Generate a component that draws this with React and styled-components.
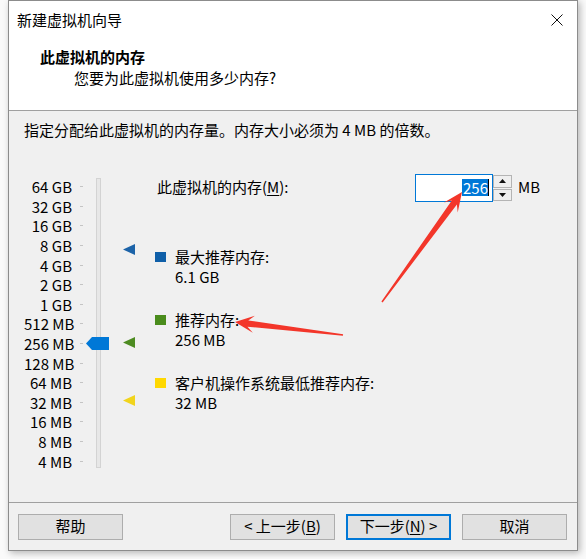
import React from 'react'
import styled, { createGlobalStyle } from 'styled-components'

const GlobalStyle = createGlobalStyle`
  html, body {
    margin: 0;
    padding: 0;
    background: #fafafa;
  }
  body {
    font-family: "Noto Sans CJK SC", "Noto Sans", sans-serif;
    font-size: 15px;
    color: #000;
  }
`

const ROW = 19.6

const scale = [
  '64 GB', '32 GB', '16 GB', '8 GB', '4 GB', '2 GB', '1 GB',
  '512 MB', '256 MB', '128 MB', '64 MB', '32 MB', '16 MB', '8 MB', '4 MB',
]

const markers = [
  { id: 'max', color: '#1c63a8', at: 3.2 },
  { id: 'rec', color: '#4d8b21', at: 7.95 },
  { id: 'min', color: '#f1d41c', at: 10.9 },
]

const legend = [
  { id: 'max', color: '#0f5fa8', title: '最大推荐内存:', value: '6.1 GB' },
  { id: 'rec', color: '#4a8c1c', title: '推荐内存:', value: '256 MB' },
  { id: 'min', color: '#ffd800', title: '客户机操作系统最低推荐内存:', value: '32 MB' },
]

// tapered screenshot-style arrow, from tail to tip
const arrowPoints = (tx, ty, hx, hy) => {
  const dx = hx - tx
  const dy = hy - ty
  const len = Math.hypot(dx, dy)
  const ux = dx / len
  const uy = dy / len
  const nx = -uy
  const ny = ux
  const at = (back, side) => [hx - ux * back + nx * side, hy - uy * back + ny * side]
  const pts = [
    [tx + nx * 0.8, ty + ny * 0.8],
    at(13, 3.2),
    at(19, 8.5),
    [hx, hy],
    at(19, -8.5),
    at(13, -3.2),
    [tx - nx * 0.8, ty - ny * 0.8],
  ]
  return pts.map(p => p.map(v => v.toFixed(1)).join(',')).join(' ')
}

const App = () => {
  return (
    <Page>
      <GlobalStyle />
      <Window>
        <Header>
          <TitleBar>
            <WindowTitle>新建虚拟机向导</WindowTitle>
            <CloseIcon width="12" height="12" viewBox="0 0 12 12">
              <path d="M0.5 0.5 L11.5 11.5 M11.5 0.5 L0.5 11.5" stroke="#111" strokeWidth="1" fill="none" />
            </CloseIcon>
          </TitleBar>
          <HeaderText>
            <PageTitle>此虚拟机的内存</PageTitle>
            <PageSubtitle>您要为此虚拟机使用多少内存?</PageSubtitle>
          </HeaderText>
        </Header>

        <Body>
          <Description>指定分配给此虚拟机的内存量。内存大小必须为 4 MB 的倍数。</Description>
          <Main>
            <SliderArea>
              <ScaleList>
                {scale.map(label => (
                  <ScaleRow key={label}>
                    <ScaleLabel>{label}</ScaleLabel>
                    <Tick />
                  </ScaleRow>
                ))}
              </ScaleList>
              <Track />
              <Thumb width="23" height="13" viewBox="0 0 23 13" style={{ top: 8.5 * ROW - 6.5 }}>
                <polygon points="0,6.5 6,0 23,0 23,13 6,13" fill="#0078d7" />
              </Thumb>
              <MarkerRail>
                {markers.map(m => (
                  <Marker key={m.id} width="12" height="11" viewBox="0 0 12 11" style={{ top: m.at * ROW + ROW / 2 - 5.5 }}>
                    <polygon points="0,5.5 12,0 12,11" fill={m.color} />
                  </Marker>
                ))}
              </MarkerRail>
            </SliderArea>

            <Info>
              <MemoryRow>
                <MemoryLabel>此虚拟机的内存(<u>M</u>):</MemoryLabel>
                <InputBox>
                  <Selected>256</Selected>
                  <Caret />
                </InputBox>
                <Spinner>
                  <SpinButton>
                    <svg width="7" height="4" viewBox="0 0 7 4"><polygon points="3.5,0 7,4 0,4" fill="#111" /></svg>
                  </SpinButton>
                  <SpinButton>
                    <svg width="7" height="4" viewBox="0 0 7 4"><polygon points="0,0 7,0 3.5,4" fill="#111" /></svg>
                  </SpinButton>
                </Spinner>
                <Unit>MB</Unit>
              </MemoryRow>

              <Legend>
                {legend.map(item => (
                  <LegendItem key={item.id}>
                    <Swatch $color={item.color} />
                    <LegendText>
                      <div>{item.title}</div>
                      <div>{item.value}</div>
                    </LegendText>
                  </LegendItem>
                ))}
              </Legend>
            </Info>
          </Main>
        </Body>

        <Footer>
          <Button>帮助</Button>
          <ButtonGroup>
            <Button>&lt; 上一步(<u>B</u>)</Button>
            <Button $primary>下一步(<u>N</u>) &gt;</Button>
            <Button>取消</Button>
          </ButtonGroup>
        </Footer>
      </Window>

      <Overlay width="586" height="559" viewBox="0 0 586 559">
        <polygon points={arrowPoints(382, 302, 462, 192)} fill="#f3362a" />
        <polygon points={arrowPoints(343, 335, 235, 322)} fill="#f3362a" />
      </Overlay>
    </Page>
  )
}

const Page = styled.div`
  position: relative;
  width: 586px;
  height: 559px;
  padding-left: 8px;
  box-sizing: border-box;
  overflow: hidden;
`

const Window = styled.div`
  width: 570px;
  height: 551px;
  box-sizing: border-box;
  border: 1px solid #8c8c8c;
  background: #f0f0f0;
  display: flex;
  flex-direction: column;
  box-shadow: 2px 2px 7px rgba(0, 0, 0, 0.28);
`

const Header = styled.div`
  height: 110px;
  box-sizing: border-box;
  background: #fff;
  border-bottom: 1px solid #a0a0a0;
`

const TitleBar = styled.div`
  height: 38px;
  display: flex;
  align-items: center;
  justify-content: space-between;
  padding: 0 14px 0 8px;
`

const WindowTitle = styled.div`
  line-height: 20px;
`

const CloseIcon = styled.svg`
  display: block;
`

const HeaderText = styled.div`
  margin-top: 7px;
  padding-left: 31px;
`

const PageTitle = styled.div`
  font-weight: bold;
  line-height: 21px;
`

const PageSubtitle = styled.div`
  line-height: 21px;
  padding-left: 34px;
`

const Body = styled.div`
  flex: 1;
  padding: 9px 0 0 15px;
`

const Description = styled.div`
  line-height: 20px;
`

const Main = styled.div`
  display: flex;
  align-items: flex-start;
  margin-top: 34px;
`

const SliderArea = styled.div`
  position: relative;
  display: flex;
  align-items: flex-start;
  margin-top: 3px;
`

const ScaleList = styled.div`
  display: flex;
  flex-direction: column;
`

const ScaleRow = styled.div`
  height: ${ROW}px;
  display: flex;
  align-items: center;
`

const ScaleLabel = styled.div`
  width: 48px;
  text-align: right;
  line-height: 1;
  white-space: nowrap;
`

const Tick = styled.div`
  width: 3px;
  height: 1px;
  margin-left: 8px;
  background: #c4c4c4;
`

const Track = styled.div`
  width: 5px;
  height: 290px;
  margin: 1px 0 0 13px;
  box-sizing: border-box;
  border: 1px solid #d3d3d3;
  background: #e7e7e7;
`

const Thumb = styled.svg`
  position: absolute;
  left: 62px;
  display: block;
`

const MarkerRail = styled.div`
  position: relative;
  width: 12px;
  height: ${15 * ROW}px;
  margin-left: 22px;
`

const Marker = styled.svg`
  position: absolute;
  left: 0;
  display: block;
`

const Info = styled.div`
  display: flex;
  flex-direction: column;
  margin-left: 20px;
`

const MemoryRow = styled.div`
  display: flex;
  align-items: center;
  height: 28px;
`

const MemoryLabel = styled.div`
  width: 260px;
  box-sizing: border-box;
  padding: 0 0 2px 2px;
  line-height: 20px;

  u {
    text-underline-offset: 2px;
  }
`

const InputBox = styled.div`
  width: 78px;
  height: 28px;
  box-sizing: border-box;
  border: 1px solid #0078d7;
  background: #fff;
  display: flex;
  justify-content: flex-end;
  align-items: center;
  padding: 0 3px 2px 0;
`

const Selected = styled.span`
  background: #0078d7;
  color: #fff;
  line-height: 17px;
  padding: 0 0 0 1px;
`

const Caret = styled.span`
  width: 1px;
  height: 17px;
  background: #000;
`

const Spinner = styled.div`
  width: 19px;
  height: 28px;
  display: flex;
  flex-direction: column;
  gap: 1px;
  padding: 1px 0;
  box-sizing: border-box;
`

const SpinButton = styled.div`
  flex: 1;
  box-sizing: border-box;
  border: 1px solid #b4b4b4;
  background: #efefef;
  display: flex;
  align-items: center;
  justify-content: center;

  svg {
    display: block;
  }
`

const Unit = styled.div`
  margin-left: 6px;
  line-height: 20px;
  padding-bottom: 2px;
`

const Legend = styled.div`
  display: flex;
  flex-direction: column;
  gap: 23px;
  margin-top: 45px;
`

const LegendItem = styled.div`
  display: flex;
  align-items: flex-start;
`

const Swatch = styled.div`
  width: 11px;
  height: 10px;
  margin-top: 5px;
  background: ${p => p.$color};
`

const LegendText = styled.div`
  margin-left: 9px;
  line-height: 20px;
`

const Footer = styled.div`
  height: 48px;
  box-sizing: border-box;
  border-top: 1px solid #a0a0a0;
  padding: 11px 10px 0 9px;
  display: flex;
  align-items: flex-start;
`

const ButtonGroup = styled.div`
  display: flex;
  gap: 11px;
  margin-left: auto;
`

const Button = styled.button`
  width: 105px;
  height: 26px;
  box-sizing: border-box;
  padding: 0 0 2px;
  border: ${p => (p.$primary ? '2px solid #0078d7' : '1px solid #adadad')};
  background: #e1e1e1;
  font-family: inherit;
  font-size: 15px;
  color: #000;
  line-height: 20px;
  border-radius: 0;

  u {
    text-underline-offset: 2px;
  }
`

const Overlay = styled.svg`
  position: absolute;
  top: 0;
  left: 0;
  pointer-events: none;
`

export default App
